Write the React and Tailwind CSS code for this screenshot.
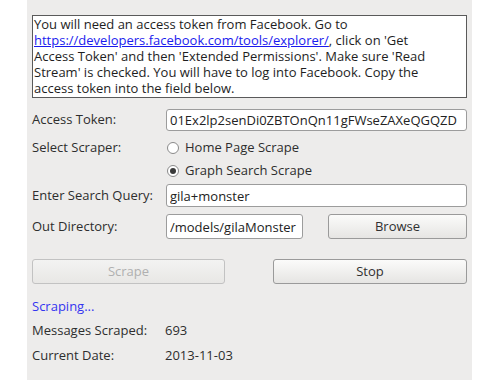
import React, { useState } from 'react';

const font = { fontFamily: '"Open Sans", "DejaVu Sans", sans-serif' };

const Radio = ({ checked, label, onClick }) => (
    <div className="flex items-center h-[20px] gap-[6px] pl-[1px] cursor-pointer" onClick={onClick}>
        <span className="w-[12px] h-[12px] rounded-full border border-[#8a8a8a] bg-white flex items-center justify-center shrink-0">
            {checked && <span className="w-[6px] h-[6px] rounded-full bg-[#3a3a3a]" />}
        </span>
        <span className="text-[13px] text-[#2e2e2e]">{label}</span>
    </div>
);

const btnCls = 'h-[25px] rounded-[3px] border border-[#9a9a9a] bg-gradient-to-b from-[#fbfbfa] to-[#e6e5e3] text-[13px] text-[#303030] flex items-center justify-center';
const inputCls = 'rounded-[3px] border border-[#9c9c9c] bg-white px-[3px] text-[13px] text-[#222] outline-none overflow-hidden';

export default function App() {
    const [mode, setMode] = useState('graph');

    return (
        <div className="w-[500px] h-[380px] bg-white flex" style={font}>
            <div className="ml-[27px] w-[445px] h-full bg-[#edeceb] px-[5px] pt-[15px] flex flex-col">
                {/* instructions */}
                <div className="h-[83px] border border-[#5a5a5a] bg-white px-[1px] text-[13px] leading-[16px] text-[#1e1e1e] whitespace-nowrap overflow-hidden">
                    <div>You will need an access token from Facebook. Go to</div>
                    <div>
                        <a href="#" className="text-[#1a1aee] underline">https://developers.facebook.com/tools/explorer/</a>, click on 'Get
                    </div>
                    <div>Access Token' and then 'Extended Permissions'. Make sure 'Read</div>
                    <div>Stream' is checked. You will have to log into Facebook. Copy the</div>
                    <div>access token into the field below.</div>
                </div>

                <div className="mt-[11px] flex items-center">
                    <span className="w-[134px] text-[13px] text-[#2e2e2e]">Access Token:</span>
                    <input className={`${inputCls} h-[22px] flex-1`} defaultValue="01Ex2lp2senDi0ZBTOnQn11gFWseZAXeQGQZD" />
                </div>

                <div className="mt-[7px] flex">
                    <span className="w-[134px] h-[20px] flex items-center text-[13px] text-[#2e2e2e]">Select Scraper:</span>
                    <div className="flex flex-col gap-[3px]">
                        <Radio label="Home Page Scrape" checked={mode === 'home'} onClick={() => setMode('home')} />
                        <Radio label="Graph Search Scrape" checked={mode === 'graph'} onClick={() => setMode('graph')} />
                    </div>
                </div>

                <div className="mt-[3px] flex items-center">
                    <span className="w-[134px] text-[13px] text-[#2e2e2e]">Enter Search Query:</span>
                    <input className={`${inputCls} h-[23px] flex-1`} defaultValue="gila+monster" />
                </div>

                <div className="mt-[7px] flex items-center">
                    <span className="w-[134px] text-[13px] text-[#2e2e2e]">Out Directory:</span>
                    <input className={`${inputCls} h-[25px] w-[137px]`} defaultValue="/models/gilaMonster" />
                    <button className={`${btnCls} ml-[25px] flex-1`}>Browse</button>
                </div>

                <div className="mt-[20px] flex gap-[48px]">
                    <button disabled className="h-[25px] w-[193px] rounded-[3px] border border-[#c2c2c2] bg-gradient-to-b from-[#f3f3f2] to-[#e8e7e5] text-[13px] text-[#b0b0b0]">Scrape</button>
                    <button className={`${btnCls} flex-1`}>Stop</button>
                </div>

                <div className="mt-[13px] h-[20px] flex items-center text-[13px] text-[#3434f0]">Scraping...</div>

                <div className="mt-[4px] h-[20px] flex items-center text-[13px] text-[#2e2e2e]">
                    <span className="w-[133px]">Messages Scraped:</span>
                    <span>693</span>
                </div>
                <div className="mt-[5px] h-[20px] flex items-center text-[13px] text-[#2e2e2e]">
                    <span className="w-[133px]">Current Date:</span>
                    <span>2013-11-03</span>
                </div>
            </div>
        </div>
    );
}
